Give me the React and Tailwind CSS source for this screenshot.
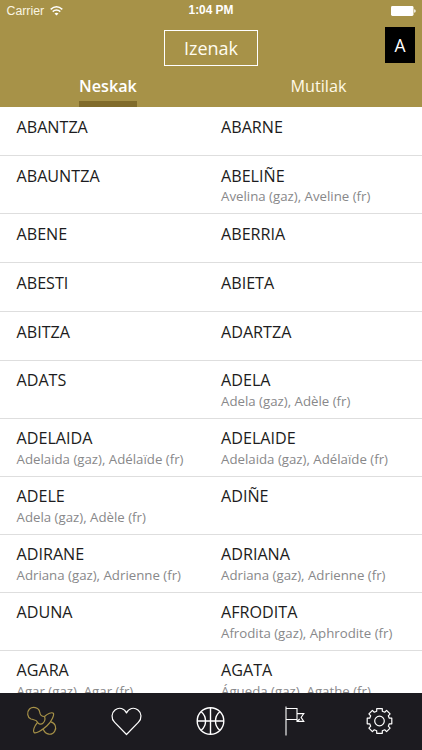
const ROWS = [
  { h: 'h-[49px]', a: ['ABANTZA'], b: ['ABARNE'] },
  { h: 'h-[58px]', a: ['ABAUNTZA'], b: ['ABELIÑE', 'Avelina (gaz), Aveline (fr)'] },
  { h: 'h-[49px]', a: ['ABENE'], b: ['ABERRIA'] },
  { h: 'h-[49px]', a: ['ABESTI'], b: ['ABIETA'] },
  { h: 'h-[49px]', a: ['ABITZA'], b: ['ADARTZA'] },
  { h: 'h-[58px]', tight: true, a: ['ADATS'], b: ['ADELA', 'Adela (gaz), Adèle (fr)'] },
  { h: 'h-[58px]', tight: true, a: ['ADELAIDA', 'Adelaida (gaz), Adélaïde (fr)'], b: ['ADELAIDE', 'Adelaida (gaz), Adélaïde (fr)'] },
  { h: 'h-[58px]', tight: true, a: ['ADELE', 'Adela (gaz), Adèle (fr)'], b: ['ADIÑE'] },
  { h: 'h-[58px]', tight: true, a: ['ADIRANE', 'Adriana (gaz), Adrienne (fr)'], b: ['ADRIANA', 'Adriana (gaz), Adrienne (fr)'] },
  { h: 'h-[58px]', tight: true, a: ['ADUNA'], b: ['AFRODITA', 'Afrodita (gaz), Aphrodite (fr)'] },
  { h: 'h-[58px]', tight: true, a: ['AGARA', 'Agar (gaz), Agar (fr)'], b: ['AGATA', 'Águeda (gaz), Agathe (fr)'] },
];

function Name({ item, tight, className = '' }) {
  return (
    <div className={`whitespace-nowrap ${tight ? 'pt-[8px]' : 'pt-[9px]'} ${className}`}>
      <div className="text-[16.15px] leading-[22px] text-[#1c1c20]">{item[0]}</div>
      {item[1] && (
        <div className={`text-[13.25px] text-[#88888a] ${tight ? 'leading-[20px]' : 'leading-[19px]'}`}>{item[1]}</div>
      )}
    </div>
  );
}

function TabIcon({ children, color = 'text-white' }) {
  return (
    <div className={`flex flex-1 items-center justify-center ${color}`}>
      <svg width="36" height="36" viewBox="-17.5 -18 36 36" fill="none" stroke="currentColor" strokeWidth="1.2" strokeLinejoin="round">
        {children}
      </svg>
    </div>
  );
}

export default function App() {
  return (
    <div className="flex h-[750px] w-[422px] flex-col overflow-hidden bg-white font-['Open_Sans',sans-serif]">
      <header className="flex h-[107px] shrink-0 flex-col bg-[#a79248] text-white">
        <div className="grid h-[22px] grid-cols-3 items-center px-[7px] font-['Liberation_Sans',sans-serif] text-[12px]">
          <div className="flex items-center gap-[6px] text-[#faf5e3]">
            <span className="-ml-[0.5px] text-[12.3px]">Carrier</span>
            <svg width="13" height="10" viewBox="0 0 13 10" fill="none" stroke="white" strokeWidth="1.5">
              <path d="M.7 3.4Q6.5-1.8 12.3 3.4M2.7 5.6q3.8-3.2 7.6 0" />
              <path d="M4.5 7.4q2-1.5 4 0l-2 2Z" fill="white" stroke="none" />
            </svg>
          </div>
          <div className="text-center text-[11.9px] font-bold whitespace-nowrap">1:04 PM</div>
          <div className="-mr-[1px] flex items-center justify-end">
            <svg width="25" height="10" viewBox="0 0 25 10" fill="white">
              <rect width="22.5" height="10" rx="1.4" />
              <path d="M23.2 3.2q1.5 0 1.5 1.8t-1.5 1.8Z" />
            </svg>
          </div>
        </div>
        <div className="grid h-[51px] grid-cols-[1fr_94px_1fr] items-start">
          <div />
          <div className="mt-[8px] flex h-[36px] items-center justify-center border border-white text-[18px] text-[#fffcf0]">Izenak</div>
          <div className="mt-[5px] mr-[7px] flex h-[36px] w-[30px] items-center justify-center justify-self-end bg-black text-[17.5px]">A</div>
        </div>
        <div className="grid flex-1 grid-cols-2 text-[16px] leading-[26px]">
          <div className="ml-[5px] flex flex-col items-center">
            <div className="flex h-full flex-col justify-between">
              <span className="text-[16.2px] font-semibold">Neskak</span>
              <span className="h-[6px] bg-[#806b2b]" />
            </div>
          </div>
          <div className="ml-[4px] text-center text-[16.2px] text-[#fff9e6]">Mutilak</div>
        </div>
      </header>
      <main className="h-[586px] shrink-0 overflow-hidden">
        {ROWS.map((row) => (
          <div key={row.a[0]} className={`grid grid-cols-[221px_1fr] border-b border-[#dedede] ${row.h}`}>
            <Name item={row.a} tight={row.tight} className="pl-[16.5px]" />
            <Name item={row.b} tight={row.tight} />
          </div>
        ))}
      </main>
      <nav className="flex h-[57px] shrink-0 bg-[#1c1b20] pb-[2px]">
        <TabIcon color="text-[#a79248]">
          <path d="M3-4.5C0-4.5-1.5-6-1.8-9C-2.8-14-9-14.8-12-12C-15-9-14.2-3.5-10.5-2C-7-.8-5-1.5-4 1.3C-3.2 3.5 0 3.8 1.8 1.8C3.5 0 4-2 3-4.5" />
          <path d="M3-4.5C6-7.5 10.5-9 11.8-7.8C13-6.3 10.5 0 5.5 4.8C.5 9.5-6 13-7.4 11.5C-8.8 10-7.5 5.5-4 1.3" />
          <path d="M9.3.9C13.7 1.8 15.4 6.8 13.2 10.2C10.5 14.7 4.3 14.3 1.7 8.3" />
        </TabIcon>
        <TabIcon>
          <path d="M0 13.5L-11.8 1.4C-15.8-2.8-15-8.2-11.5-11C-7.5-14.2-2.1-12.8 0-8.1C2.1-12.8 7.5-14.2 11.5-11C15-8.2 15.8-2.8 11.8 1.4Z" />
        </TabIcon>
        <TabIcon>
          <circle r="13.3" strokeWidth="1.4" />
          <path d="M-13.4 0H13.4M0-13.4V13.4M-9.3-9.3C-3.5-4.5-3.5 4.5-9.3 9.3M9.3-9.3C3.5-4.5 3.5 4.5 9.3 9.3" strokeWidth="1.4" />
        </TabIcon>
        <TabIcon>
          <path d="M-8.5-14.5V14.5M-8.5-12.5H2.5V-1.5H-8.5M2.5-7.4H9.3L6.6-3.6L9.3.4H2.5V-1.5M2.5.4L5.2-2" strokeWidth="1.1" strokeLinejoin="miter" />
        </TabIcon>
        <TabIcon>
          <circle r="4.8" />
          <path d="M-2.8-12.3H2.8V-9.8L5.2-8.8L7.1-10.6L10.6-7.1L8.8-5.2L9.8-2.8H12.3V2.8H9.8L8.8 5.2L10.6 7.1L7.1 10.6L5.2 8.8L2.8 9.8V12.3H-2.8V9.8L-5.2 8.8L-7.1 10.6L-10.6 7.1L-8.8 5.2L-9.8 2.8H-12.3V-2.8H-9.8L-8.8-5.2L-10.6-7.1L-7.1-10.6L-5.2-8.8L-2.8-9.8Z" />
        </TabIcon>
      </nav>
    </div>
  );
}
